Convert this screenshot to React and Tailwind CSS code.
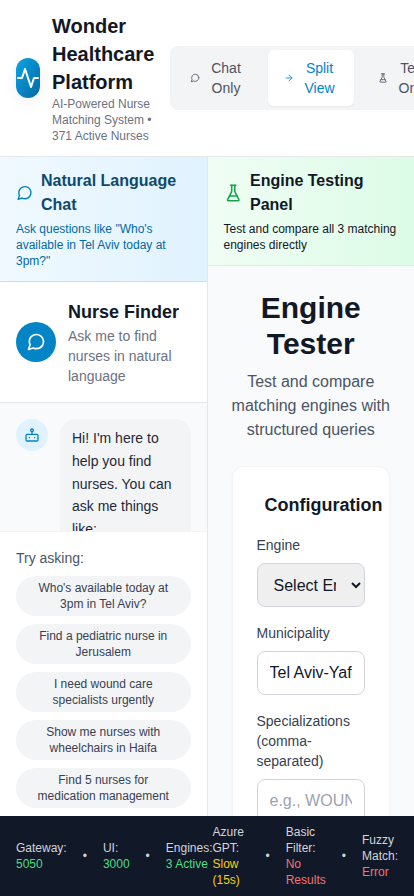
import React from "react";

const CHAT =
  "M21 11.5a8.38 8.38 0 0 1-.9 3.8 8.5 8.5 0 0 1-7.6 4.7 8.38 8.38 0 0 1-3.8-.9L3 21l1.9-5.7a8.38 8.38 0 0 1-.9-3.8 8.5 8.5 0 0 1 4.7-7.6 8.38 8.38 0 0 1 3.8-.9h.5a8.48 8.48 0 0 1 8 8v.5z";

function Icon({ className, children }) {
  return (
    <svg
      viewBox="0 0 24 24"
      fill="none"
      stroke="currentColor"
      strokeWidth="2"
      strokeLinecap="round"
      strokeLinejoin="round"
      className={"shrink-0 " + className}
    >
      {children}
    </svg>
  );
}

const ChatIcon = ({ className }) => (
  <Icon className={className}>
    <path d={CHAT} />
  </Icon>
);

const FlaskIcon = ({ className }) => (
  <Icon className={className}>
    <path d="M10 2v7.527a2 2 0 0 1-.211.896L4.72 20.55a1 1 0 0 0 .9 1.45h12.76a1 1 0 0 0 .9-1.45l-5.069-10.127A2 2 0 0 1 14 9.527V2" />
    <path d="M8.5 2h7" />
    <path d="M7 16h10" />
  </Icon>
);

const ArrowIcon = ({ className }) => (
  <Icon className={className}>
    <path d="M5 12h14" />
    <path d="m12 5 7 7-7 7" />
  </Icon>
);

const BotIcon = ({ className }) => (
  <Icon className={className}>
    <rect width="18" height="10" x="3" y="11" rx="2" />
    <circle cx="12" cy="5" r="2" />
    <path d="M12 7v4" />
    <path d="M8 16h.01" />
    <path d="M16 16h.01" />
  </Icon>
);

function Header() {
  return (
    <header className="flex h-[157px] shrink-0 items-center gap-4 border-b border-[#e5e7eb] bg-white pl-4">
      <div className="flex w-[138px] shrink-0 items-center gap-3">
        <div className="flex h-10 w-6 shrink-0 items-center justify-center rounded-xl bg-linear-to-br from-[#0ea5e9] to-[#0369a1] text-white shadow-[0_2px_15px_-3px_rgba(0,0,0,0.07),0_10px_20px_-2px_rgba(0,0,0,0.04)]">
          <Icon className="size-6">
            <path d="M22 12h-4l-3 9L9 3l-3 9H2" />
          </Icon>
        </div>
        <div>
          <h1 className="text-xl font-bold text-[#111827]">Wonder Healthcare Platform</h1>
          <p className="w-[108px] text-xs text-[#6b7280]">AI-Powered Nurse Matching System • 371 Active Nurses</p>
        </div>
      </div>
      <nav className="flex shrink-0 gap-1 rounded-lg bg-[#f3f4f6] p-1 text-sm font-medium text-[#4b5563]">
        <button className="flex w-[90px] items-center rounded-md pl-4">
          <ChatIcon className="h-4 w-[10px]" />
          <span className="ml-[7px] w-[38px]">Chat Only</span>
        </button>
        <button className="flex h-14 w-[86px] items-center rounded-md bg-white pl-4 text-[#0284c7] shadow-xs">
          <ArrowIcon className="h-4 w-[10px]" />
          <span className="ml-2 w-[35px]">Split View</span>
        </button>
        <button className="flex w-[90px] items-center rounded-md pl-5">
          <FlaskIcon className="h-4 w-[10px]" />
          <span className="ml-2 w-[34px]">Test Only</span>
        </button>
      </nav>
    </header>
  );
}

const SUGGESTIONS = [
  "Who's available today at 3pm in Tel Aviv?",
  "Find a pediatric nurse in Jerusalem",
  "I need wound care specialists urgently",
  "Show me nurses with wheelchairs in Haifa",
  "Find 5 nurses for medication management",
];

function ChatPanel() {
  return (
    <section className="flex min-w-0 flex-1 flex-col border-r border-[#e5e7eb] bg-white">
      <div className="shrink-0 border-b border-[#bae6fd] bg-linear-to-r from-[#f0f9ff] to-[#e0f2fe] px-4 py-3">
        <div className="flex items-center gap-2">
          <ChatIcon className="h-5 w-[17px] text-[#0284c7]" />
          <h2 className="font-semibold text-[#0c4a6e]">Natural Language Chat</h2>
        </div>
        <p className="mt-1 text-xs text-[#0369a1]">Ask questions like "Who's available in Tel Aviv today at 3pm?"</p>
      </div>
      <div className="flex shrink-0 items-center gap-3 border-b border-[#e5e7eb] p-4">
        <div className="flex size-10 shrink-0 items-center justify-center rounded-full bg-[#0284c7] text-white">
          <ChatIcon className="size-5" />
        </div>
        <div>
          <h3 className="text-lg font-semibold text-[#111827]">Nurse Finder</h3>
          <p className="text-sm text-[#6b7280]">Ask me to find nurses in natural language</p>
        </div>
      </div>
      <div className="flex h-32 shrink-0 items-start gap-3 overflow-hidden bg-[#f9fafb] px-4 pt-4">
        <div className="flex size-8 shrink-0 items-center justify-center rounded-full bg-[#e0f2fe] text-[#0284c7]">
          <BotIcon className="size-4" />
        </div>
        <div className="flex-1 rounded-2xl bg-[#f3f4f6] px-3 py-2 text-sm leading-relaxed text-[#1f2937]">
          Hi! I'm here to help you find nurses. You can ask me things like:
        </div>
      </div>
      <div className="shrink-0 border-t border-[#f3f4f6] bg-white px-4 pt-4">
        <p className="mb-2 text-sm text-[#4b5563]">Try asking:</p>
        <div className="flex flex-col gap-2">
          {SUGGESTIONS.map((s) => (
            <button key={s} className="rounded-full bg-[#f3f4f6] px-3 py-1 text-xs text-[#374151]">
              {s}
            </button>
          ))}
        </div>
      </div>
    </section>
  );
}

const FIELD = "block h-11 w-full rounded-lg border border-[#d1d5db] px-3 text-base text-[#111827]";

function TestPanel() {
  return (
    <section className="flex min-w-0 flex-1 flex-col overflow-hidden bg-[#f9fafb] text-[#111827]">
      <div className="shrink-0 border-b border-[#e5e7eb] bg-linear-to-r from-[#f0fdf4] to-[#dcfce7] px-4 py-3">
        <div className="flex items-center gap-2">
          <FlaskIcon className="h-5 w-[18.5px] text-[#16a34a]" />
          <h2 className="font-semibold">Engine Testing Panel</h2>
        </div>
        <p className="mt-1 text-xs">Test and compare all 3 matching engines directly</p>
      </div>
      <div className="flex flex-col gap-6 p-6">
        <div className="text-center">
          <h1 className="text-3xl font-bold">Engine Tester</h1>
          <p className="-mx-2 mt-2 text-[#4b5563]">
            Test and compare
            <br />
            matching engines with structured queries
          </p>
        </div>
        <div className="rounded-xl border border-[#f3f4f6] bg-white p-6 shadow-xs">
          <h3 className="mb-4 pl-2 text-lg font-semibold">Configuration</h3>
          <div className="flex flex-col gap-4">
            <label className="text-sm font-medium text-[#374151]">
              <span className="mb-2 block">Engine</span>
              <select className={FIELD + " bg-[#efefef]"}>
                <option>Select Engine</option>
              </select>
            </label>
            <label className="text-sm font-medium text-[#374151]">
              <span className="mb-2 block">Municipality</span>
              <input className={FIELD} defaultValue="Tel Aviv-Yafo" />
            </label>
            <label className="text-sm font-medium text-[#374151]">
              <span className="mb-2 block">Specializations (comma-separated)</span>
              <input className={FIELD + " placeholder:text-[#9ca3af]"} placeholder="e.g., WOUND_CARE" />
            </label>
          </div>
        </div>
      </div>
    </section>
  );
}

function Footer() {
  return (
    <footer className="flex h-20 shrink-0 items-center justify-between bg-[#111827] px-4 text-xs text-[#d1d5db]">
      <div className="flex items-center gap-4">
        <div className="w-[50.7px]">Gateway: <span className="text-[#4ade80]">5050</span></div>
        <span>•</span>
        <div className="w-[26.7px]">UI: <span className="text-[#4ade80]">3000</span></div>
        <span>•</span>
        <div className="w-[46px]">Engines: <span className="whitespace-nowrap text-[#4ade80]">3 Active</span></div>
      </div>
      <div className="flex shrink-0 items-center gap-4">
        <div className="w-[37px]">Azure GPT: <span className="text-[#facc15]">Slow (15s)</span></div>
        <span>•</span>
        <div className="w-[40.1px]">Basic Filter: <span className="text-[#f87171]">No Results</span></div>
        <span>•</span>
        <div className="w-9">Fuzzy Match: <span className="text-[#f87171]">Error</span></div>
      </div>
    </footer>
  );
}

export default function App() {
  return (
    <div className="flex h-[896px] w-[414px] flex-col overflow-hidden bg-white font-['Liberation_Sans',Arial,sans-serif]">
      <Header />
      <main className="flex min-h-0 flex-1 overflow-hidden">
        <ChatPanel />
        <TestPanel />
      </main>
      <Footer />
    </div>
  );
}
